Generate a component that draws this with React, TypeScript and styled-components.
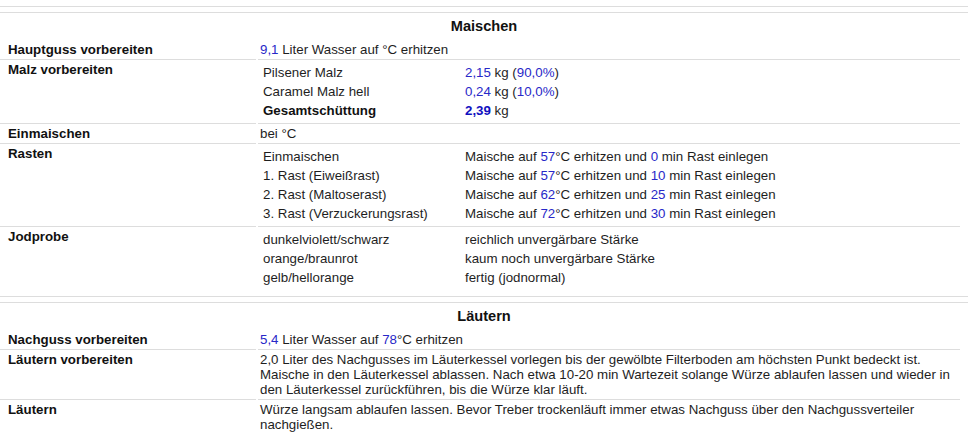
import React from "react";
import styled, { createGlobalStyle } from "styled-components";

const GlobalStyle = createGlobalStyle`
    body {
        margin: 0;
        background: #ffffff;
        font-family: Arial, "Liberation Sans", sans-serif;
        font-size: 13.3px;
        color: #1e1e1e;
    }
`

const Page = styled.div`
    width: 968px;
`

const Divider = styled.div`
    margin-top: 6px;
    height: 5px;
    border-top: 1px solid #dddddd;
    border-bottom: 1px solid #dddddd;
`

const SectionTitle = styled.h3`
    margin: 0;
    padding: 5px 0 4px;
    height: 17px;
    line-height: 17px;
    text-align: center;
    font-size: 14.6px;
    font-weight: bold;
    color: #111111;
`

const StepGrid = styled.div`
    display: grid;
    grid-template-columns: 256px 1fr;
    column-gap: 2px;
    width: 960px;
    line-height: 15px;
`

const StepLabel = styled.div<{ $first: boolean }>`
    padding: 2px 2px 2px 8px;
    border-top: 1px solid ${props => props.$first ? "transparent" : "#dddddd"};
    font-weight: bold;
    color: #111111;
`

const StepContent = styled.div<{ $first: boolean }>`
    padding: 2px;
    border-top: 1px solid ${props => props.$first ? "transparent" : "#dddddd"};
`

const SubGrid = styled.div`
    display: grid;
    grid-template-columns: 202px 1fr;
    row-gap: 4px;
    padding: 3px;
`

const SubCell = styled.div<{ $bold?: boolean }>`
    font-weight: ${props => props.$bold ? "bold" : "normal"};
    color: ${props => props.$bold ? "#111111" : "inherit"};
`

const Value = styled.span<{ $strong?: boolean }>`
    color: ${props => props.$strong ? "#1010c0" : "#2828c8"};
    font-weight: ${props => props.$strong ? "bold" : "normal"};
`

type Step = { label: string, content: React.ReactNode }

const Num = ({ children, strong }: { children: React.ReactNode, strong?: boolean }) => (
    <Value $strong={strong}>{children}</Value>
)

const Pairs = ({ rows }: { rows: [string, React.ReactNode, boolean?][] }) => (
    <SubGrid>
        {rows.map(([name, value, bold]) => (
            <React.Fragment key={name}>
                <SubCell $bold={bold}>{name}</SubCell>
                <SubCell>{value}</SubCell>
            </React.Fragment>
        ))}
    </SubGrid>
)

const malz: [string, React.ReactNode, boolean?][] = [
    ["Pilsener Malz", <><Num>2,15</Num> kg (<Num>90,0%</Num>)</>],
    ["Caramel Malz hell", <><Num>0,24</Num> kg (<Num>10,0%</Num>)</>],
    ["Gesamtschüttung", <><Num strong>2,39</Num> kg</>, true],
]

const rasten: [string, React.ReactNode][] = [
    ["Einmaischen", "57", "0"],
    ["1. Rast (Eiweißrast)", "57", "10"],
    ["2. Rast (Maltoserast)", "62", "25"],
    ["3. Rast (Verzuckerungsrast)", "72", "30"],
].map(([name, temp, min]) => [
    name,
    <>Maische auf <Num>{temp}</Num>°C erhitzen und <Num>{min}</Num> min Rast einlegen</>,
])

const jod: [string, React.ReactNode][] = [
    ["dunkelviolett/schwarz", "reichlich unvergärbare Stärke"],
    ["orange/braunrot", "kaum noch unvergärbare Stärke"],
    ["gelb/hellorange", "fertig (jodnormal)"],
]

const maischen: Step[] = [
    { label: "Hauptguss vorbereiten", content: <><Num>9,1</Num> Liter Wasser auf °C erhitzen</> },
    { label: "Malz vorbereiten", content: <Pairs rows={malz} /> },
    { label: "Einmaischen", content: <>bei °C</> },
    { label: "Rasten", content: <Pairs rows={rasten} /> },
    { label: "Jodprobe", content: <Pairs rows={jod} /> },
]

const laeutern: Step[] = [
    { label: "Nachguss vorbereiten", content: <><Num>5,4</Num> Liter Wasser auf <Num>78</Num>°C erhitzen</> },
    {
        label: "Läutern vorbereiten",
        content: <>2,0 Liter des Nachgusses im Läuterkessel vorlegen bis der gewölbte Filterboden am höchsten Punkt bedeckt ist.<br />Maische in den Läuterkessel ablassen. Nach etwa 10-20 min Wartezeit solange Würze ablaufen lassen und wieder in den Läuterkessel zurückführen, bis die Würze klar läuft.</>,
    },
    { label: "Läutern", content: <>Würze langsam ablaufen lassen. Bevor Treber trockenläuft immer etwas Nachguss über den Nachgussverteiler nachgießen.</> },
]

const Section = ({ title, steps }: { title: string, steps: Step[] }) => (
    <>
        <Divider />
        <SectionTitle>{title}</SectionTitle>
        <StepGrid>
            {steps.map((step, i) => (
                <React.Fragment key={step.label}>
                    <StepLabel $first={i === 0}>{step.label}</StepLabel>
                    <StepContent $first={i === 0}>{step.content}</StepContent>
                </React.Fragment>
            ))}
        </StepGrid>
    </>
)

export default function App() {
    return (
        <>
            <GlobalStyle />
            <Page>
                <Section title="Maischen" steps={maischen} />
                <Section title="Läutern" steps={laeutern} />
            </Page>
        </>
    )
}
